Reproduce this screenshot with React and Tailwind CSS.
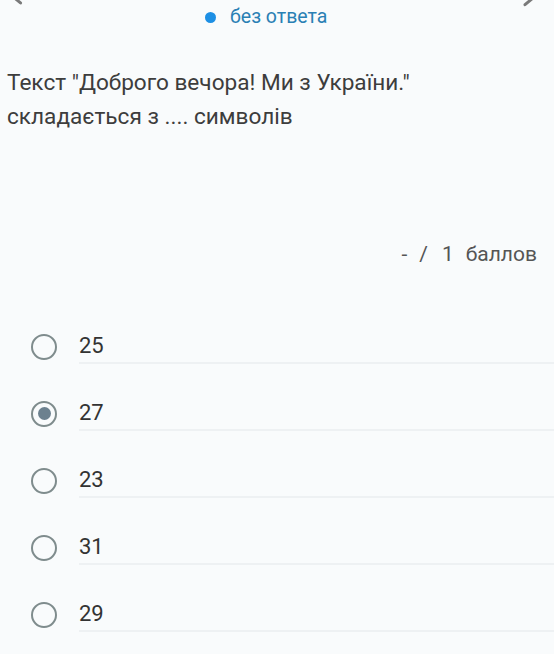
const OPTIONS = [
  { label: '25', checked: false },
  { label: '27', checked: true },
  { label: '23', checked: false },
  { label: '31', checked: false },
  { label: '29', checked: false },
]

const Radio = ({ checked }) => (
  <span className="flex h-[26px] w-[26px] shrink-0 items-center justify-center rounded-full border-[2.5px] border-[#7f8c8d]">
    {checked && <span className="h-[13px] w-[13px] rounded-full bg-[#6c818f]" />}
  </span>
)

export default function App() {
  return (
    <div className="relative h-[654px] w-[554px] overflow-hidden bg-[#f9fbfc] font-['Roboto','Liberation_Sans',sans-serif]">
      {/* cut-off chevrons at top corners */}
      <span className="absolute left-[4px] top-[-4px] h-[3px] w-[20px] rotate-[40deg] rounded-full bg-[#7a7a7a]" />
      <span className="absolute right-[16px] top-[-1px] h-[3px] w-[16px] rotate-[-40deg] rounded-full bg-[#7a7a7a]" />

      <div className="flex h-[34px] items-center pl-[205px]">
        <span className="h-[11px] w-[11px] rounded-full bg-[#1d8fe4]" />
        <span className="ml-[14px] text-[19.5px] text-[#2a80b4]">без ответа</span>
      </div>

      <p className="mt-[32px] pl-[7px] pr-[20px] text-[22.6px] leading-[34px] text-[#3d3d3d]">
        Текст "Доброго вечора! Ми з України."
        <br />
        складається з .... символів
      </p>

      <div className="mt-[106px] flex h-[30px] items-center justify-end pr-[17px] text-[21px] text-[#555]">
        <span>-</span>
        <span className="ml-[12px]">/</span>
        <span className="ml-[14px]">1</span>
        <span className="ml-[12px]">баллов</span>
      </div>

      <div className="mt-[59px] flex flex-col gap-[32px]">
        {OPTIONS.map((opt) => (
          <div key={opt.label} className="flex items-center">
            <div className="ml-[31px] flex h-[35px] items-center">
              <Radio checked={opt.checked} />
            </div>
            <div className="ml-[22px] flex h-[35px] flex-1 items-center border-b-2 border-[#eef1f3] text-[22px] text-[#333]">
              {opt.label}
            </div>
          </div>
        ))}
      </div>
    </div>
  )
}
